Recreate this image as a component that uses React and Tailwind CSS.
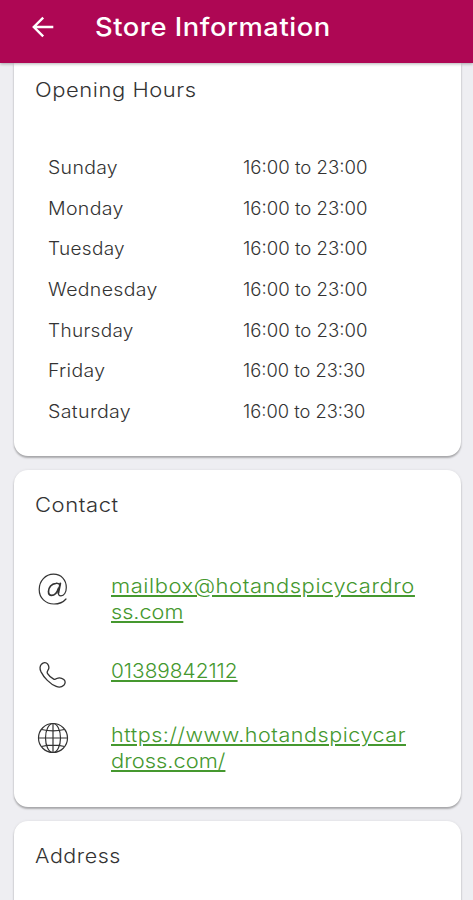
const hours = [
  { day: "Sunday", time: "16:00 to 23:00", dayScale: "scale-x-[1.08]", timeScale: "scale-x-[1.033]" },
  { day: "Monday", time: "16:00 to 23:00", dayScale: "scale-x-[1.087]", timeScale: "scale-x-[1.033]" },
  { day: "Tuesday", time: "16:00 to 23:00", dayScale: "scale-x-[1.055]", timeScale: "scale-x-[1.033]" },
  { day: "Wednesday", time: "16:00 to 23:00", dayScale: "scale-x-[1.083]", timeScale: "scale-x-[1.033]" },
  { day: "Thursday", time: "16:00 to 23:00", dayScale: "scale-x-[1.055]", timeScale: "scale-x-[1.033]" },
  { day: "Friday", time: "16:00 to 23:30", dayScale: "scale-x-[1.08]", timeScale: "scale-x-[1.017]" },
  { day: "Saturday", time: "16:00 to 23:30", dayScale: "scale-x-[1.09]", timeScale: "scale-x-[1.017]" },
];

function Card({ className, children }) {
  return (
    <section
      className={`mr-3 ml-3.5 shrink-0 bg-white shadow-[0_2px_2px_rgba(0,0,0,0.28),0_0_3px_rgba(0,0,0,0.08)] ${className}`}
    >
      {children}
    </section>
  );
}

function Heading({ className, children }) {
  return (
    <h2 className={`ml-[21px] w-fit origin-left text-[19.5px] leading-6 font-light tracking-[0.5px] ${className}`}>
      {children}
    </h2>
  );
}

function LinkLine({ className, children }) {
  return (
    <span
      className={`block w-fit origin-left whitespace-nowrap underline decoration-[1.5px] underline-offset-2 ${className}`}
    >
      {children}
    </span>
  );
}

function ContactRow({ className, icon, children }) {
  return (
    <div className={`flex items-start pl-[23px] ${className}`}>
      {icon}
      <a className="ml-[42px] pt-px text-[20px] leading-[25.5px] font-light text-[#45982f]">{children}</a>
    </div>
  );
}

function BackIcon() {
  return (
    <svg className="h-6 w-6" viewBox="0 0 24 24" fill="none" stroke="currentColor" strokeWidth="2.4">
      <path d="M22.3 12H3.2M12.2 2.6 2.8 12l9.4 9.4" />
    </svg>
  );
}

function AtIcon() {
  return (
    <svg className="h-8 w-8" viewBox="0 0 32 32" fill="none" stroke="currentColor" strokeLinecap="round">
      <path
        strokeWidth="1.2"
        d="M29 26C26 29.5 21.8 31 17 31 8.5 31 2.2 25 2.2 16.500S8.5 1.2 16.5 1.2 29.3 7 29.3 14.500c0 5-2.3 8.3-5.3 8.3-2.2 0-2.9-1.4-2.4-3.5"
      />
      <path strokeWidth="1.9" d="m23.3 10.5-2 9.5" />
      <path
        strokeWidth="1.7"
        d="M22.7 11.5c-.9-1-2.2-1.400-3.9-1.200-4.2.4-7.3 4-7.3 8.200 0 2.500 1.100 3.900 3 3.900 3 0 5.8-3.400 7-7.200"
      />
    </svg>
  );
}

function PhoneIcon() {
  return (
    <svg className="mt-px h-8 w-8" viewBox="0 0 32 32" fill="none" stroke="currentColor" strokeWidth="1.3" strokeLinejoin="round">
      <path d="M4.5 5.200c1.800-2 4.600-2.200 6-.3 1.500 2 1.700 4.600.5 6.300-.9 1.300-1.300 2-.6 3.200 1.500 2.500 3.700 4.300 6.300 5.700 1.100.6 1.900.1 3-.6 2-1 5.100-.6 7.100 1 1.900 1.600 1.700 3.900 0 5.700-2.100 2-4.900 2.300-7.600 1.200C13 25.100 6.900 18.600 3.900 12.600c-1.200-2.600-1.300-5.200.6-7.400Z" />
    </svg>
  );
}

function GlobeIcon() {
  return (
    <svg className="h-8 w-8" viewBox="0 0 32 32" fill="none" stroke="currentColor" strokeWidth="1.2">
      <circle cx="16" cy="16" r="14.5" />
      <ellipse cx="16" cy="16" rx="7.5" ry="14.5" />
      <path d="M16 1.500v29M1.500 16h29M4.500 7.500q11.500 2.600 23 0M4.500 24.500q11.500-2.600 23 0" />
    </svg>
  );
}

export default function App() {
  return (
    <div className="flex h-[900px] w-full flex-col overflow-hidden bg-[#eeeef2] font-['Inter',sans-serif] text-[#333333]">
      <header className="z-10 flex h-[63px] shrink-0 items-start bg-[#ae0754] pl-[31px] text-white shadow-[0_1px_3px_rgba(0,0,0,0.3)]">
        <div className="pt-[15px]">
          <BackIcon />
        </div>
        <h1 className="mt-[11px] ml-10 origin-left scale-x-[1.093] text-[25px] leading-8 font-medium tracking-[0.5px] whitespace-nowrap">
          Store Information
        </h1>
      </header>

      <Card className="h-[393px] rounded-b-[14px]">
        <Heading className="mt-[15px] scale-x-[1.126]">Opening Hours</Heading>
        <div className="pt-[45px] pl-[34px]">
          {hours.map((row) => (
            <div key={row.day} className="flex h-[40.7px] items-center text-[18px] font-light whitespace-nowrap">
              <div className="w-[195px]">
                <span className={`inline-block origin-left tracking-[0.3px] ${row.dayScale}`}>{row.day}</span>
              </div>
              <span className={`origin-left ${row.timeScale}`}>{row.time}</span>
            </div>
          ))}
        </div>
      </Card>

      <Card className="mt-3.5 h-[337px] rounded-[14px] pt-[23px]">
        <Heading className="scale-x-[1.13]">Contact</Heading>
        <ContactRow className="pt-[56px]" icon={<AtIcon />}>
          <LinkLine className="scale-x-[1.098] tracking-[0.5px]">mailbox@hotandspicycardro</LinkLine>
          <LinkLine className="scale-x-[1.083]">ss.com</LinkLine>
        </ContactRow>
        <ContactRow className="pt-[33px]" icon={<PhoneIcon />}>
          <LinkLine className="scale-x-[1.04]">01389842112</LinkLine>
        </ContactRow>
        <ContactRow className="pt-[31px]" icon={<GlobeIcon />}>
          <LinkLine className="scale-x-[1.077] tracking-[0.5px]">https://www.hotandspicycar</LinkLine>
          <LinkLine className="scale-x-[1.095]">dross.com/</LinkLine>
        </ContactRow>
      </Card>

      <Card className="mt-3.5 h-[200px] rounded-t-[14px] pt-[23px]">
        <Heading className="scale-x-[1.1]">Address</Heading>
      </Card>
    </div>
  );
}
